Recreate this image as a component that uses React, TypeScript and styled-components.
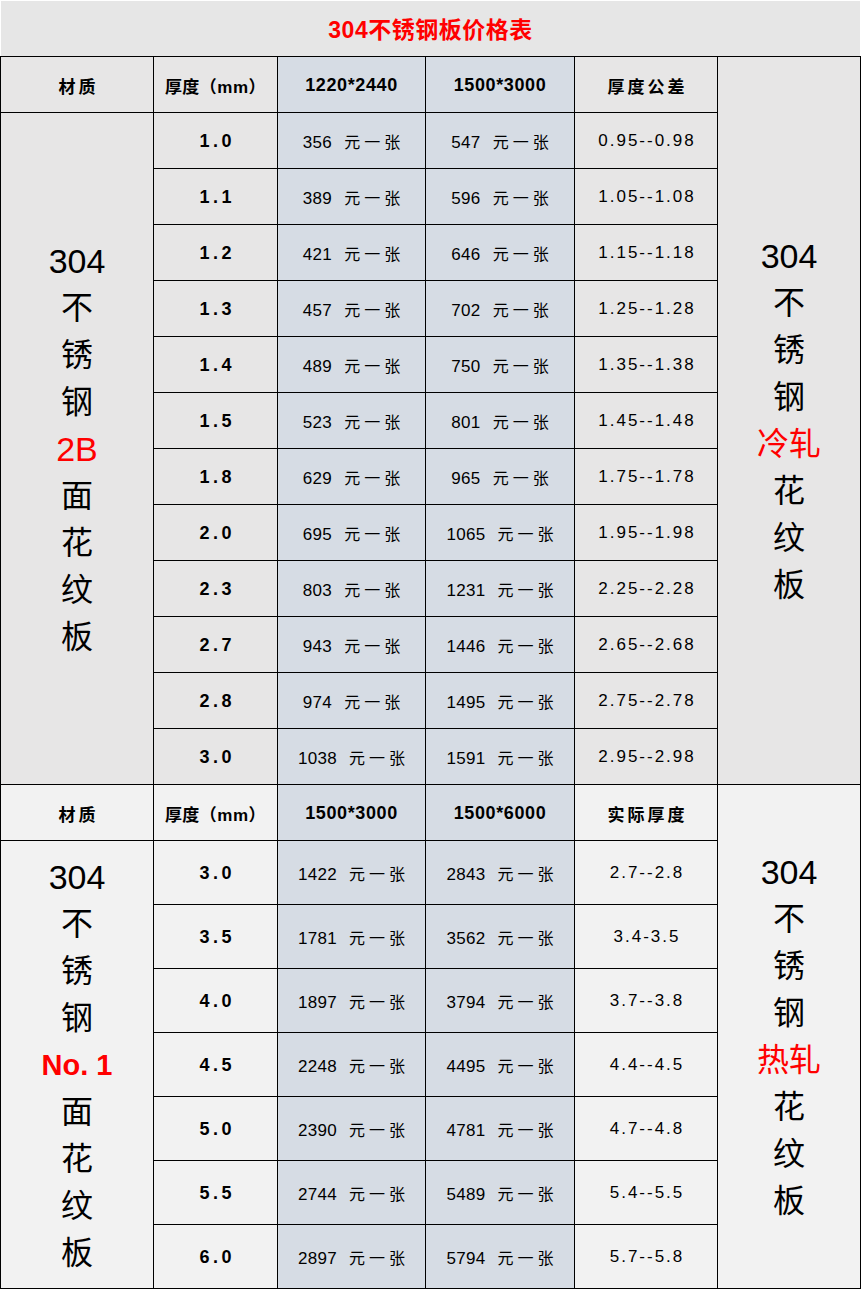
import React from "react";
import styled, { createGlobalStyle } from "styled-components";

const GlobalStyle = createGlobalStyle`
  html, body { margin: 0; padding: 0; background: #ffffff; }
  body { font-family: "Liberation Sans", "Noto Sans CJK SC", sans-serif; color: #000; }
`;

const CJK = `"Liberation Sans", "Noto Sans CJK SC", sans-serif`;

const Page = styled.div`
  width: 861px;
`;

const TitleBar = styled.div`
  height: 56px;
  border: 1px solid #ffffff;
  border-bottom: none;
  background: #e6e6e6;
  display: flex;
  align-items: center;
  justify-content: center;
  padding-bottom: 2px;
  box-sizing: border-box;
  color: #ff0000;
  font-family: ${CJK};
  font-weight: 700;
  font-size: 23px;
  letter-spacing: 0.5px;
`;

const Grid = styled.div`
  display: grid;
  grid-template-columns: 152px 123px 147px 148px 142px 142px;
  grid-template-rows: repeat(14, 55px) repeat(7, 63px);
  gap: 1px;
  padding: 1px;
  background: #000;
`;

type Tone = "a" | "b" | "size";
const toneBg: Record<Tone, string> = { a: "#e7e6e6", b: "#f2f2f2", size: "#d6dce4" };

const Cell = styled.div<{ $tone: Tone; $span?: number }>`
  background: ${(p) => toneBg[p.$tone]};
  display: flex;
  align-items: center;
  justify-content: center;
  padding-top: 1px;
  ${(p) => (p.$span ? `grid-row: span ${p.$span};` : "")}
`;

const HeadText = styled.span<{ $tight?: boolean }>`
  font-family: ${CJK};
  font-weight: 700;
  font-size: 17px;
  letter-spacing: ${(p) => (p.$tight ? "0.5px" : "3px")};
  margin-right: ${(p) => (p.$tight ? "0" : "-3px")};
`;

const SizeHead = styled.span`
  font-family: "Liberation Sans", sans-serif;
  font-weight: 700;
  font-size: 18px;
  letter-spacing: 0.6px;
`;

const Thick = styled.span`
  font-family: "Liberation Sans", sans-serif;
  font-weight: 700;
  font-size: 18px;
  letter-spacing: 3.5px;
  margin-right: -3.5px;
`;

const Price = styled.span`
  display: flex;
  align-items: baseline;
  font-size: 17px;
`;

const Num = styled.span`
  font-family: "Liberation Sans", sans-serif;
  letter-spacing: 0.3px;
`;

const Unit = styled.span`
  font-family: "Noto Sans CJK SC", sans-serif;
  font-size: 16px;
  letter-spacing: 4px;
  margin-left: 12px;
  margin-right: -4px;
`;

const Tol = styled.span`
  font-family: "Liberation Sans", sans-serif;
  font-size: 17px;
  letter-spacing: 2px;
  margin-right: -2px;
`;

const Stack = styled.div`
  display: flex;
  flex-direction: column;
  align-items: center;
`;

const BigLine = styled.span<{ $red?: boolean; $bold?: boolean; $sans?: boolean }>`
  height: 47px;
  line-height: 47px;
  font-family: ${CJK};
  font-size: ${(p) => (p.$sans ? (p.$bold ? "29px" : "34px") : "32px")};
  font-weight: ${(p) => (p.$bold ? 700 : 400)};
  color: ${(p) => (p.$red ? "#ff0000" : "#000")};
  white-space: pre;
`;

type Line = { t: string; red?: boolean; bold?: boolean; sans?: boolean };

const BigLabel = ({ lines }: { lines: Line[] }) => (
  <Stack>
    {lines.map((l, i) => (
      <BigLine key={i} $red={l.red} $bold={l.bold} $sans={l.sans}>
        {l.t}
      </BigLine>
    ))}
  </Stack>
);

const base = (mid: Line): Line[] => [
  { t: "304", sans: true },
  { t: "不" },
  { t: "锈" },
  { t: "钢" },
  mid,
];

const tail = (first: string | null): Line[] =>
  [first ? { t: first } : null, { t: "花" }, { t: "纹" }, { t: "板" }].filter(Boolean) as Line[];

type Row = [string, string, string, string];

const rows1: Row[] = [
  ["1.0", "356", "547", "0.95--0.98"],
  ["1.1", "389", "596", "1.05--1.08"],
  ["1.2", "421", "646", "1.15--1.18"],
  ["1.3", "457", "702", "1.25--1.28"],
  ["1.4", "489", "750", "1.35--1.38"],
  ["1.5", "523", "801", "1.45--1.48"],
  ["1.8", "629", "965", "1.75--1.78"],
  ["2.0", "695", "1065", "1.95--1.98"],
  ["2.3", "803", "1231", "2.25--2.28"],
  ["2.7", "943", "1446", "2.65--2.68"],
  ["2.8", "974", "1495", "2.75--2.78"],
  ["3.0", "1038", "1591", "2.95--2.98"],
];

const rows2: Row[] = [
  ["3.0", "1422", "2843", "2.7--2.8"],
  ["3.5", "1781", "3562", "3.4-3.5"],
  ["4.0", "1897", "3794", "3.7--3.8"],
  ["4.5", "2248", "4495", "4.4--4.5"],
  ["5.0", "2390", "4781", "4.7--4.8"],
  ["5.5", "2744", "5489", "5.4--5.5"],
  ["6.0", "2897", "5794", "5.7--5.8"],
];

const PriceText = ({ v }: { v: string }) => (
  <Price>
    <Num>{v}</Num>
    <Unit>元一张</Unit>
  </Price>
);

const Section = ({
  tone,
  sizes,
  tolHead,
  rows,
  left,
  right,
}: {
  tone: Tone;
  sizes: [string, string];
  tolHead: string;
  rows: Row[];
  left: Line[];
  right: Line[];
}) => (
  <>
    <Cell $tone={tone}><HeadText>材质</HeadText></Cell>
    <Cell $tone={tone}><HeadText $tight>厚度（mm）</HeadText></Cell>
    <Cell $tone="size"><SizeHead>{sizes[0]}</SizeHead></Cell>
    <Cell $tone="size"><SizeHead>{sizes[1]}</SizeHead></Cell>
    <Cell $tone={tone}><HeadText>{tolHead}</HeadText></Cell>
    <Cell $tone={tone} $span={rows.length + 1}><BigLabel lines={right} /></Cell>
    <Cell $tone={tone} $span={rows.length}><BigLabel lines={left} /></Cell>
    {rows.map((r) => (
      <React.Fragment key={r[0] + r[1]}>
        <Cell $tone={tone}><Thick>{r[0]}</Thick></Cell>
        <Cell $tone="size"><PriceText v={r[1]} /></Cell>
        <Cell $tone="size"><PriceText v={r[2]} /></Cell>
        <Cell $tone={tone}><Tol>{r[3]}</Tol></Cell>
      </React.Fragment>
    ))}
  </>
);

export default function App() {
  return (
    <Page>
      <GlobalStyle />
      <TitleBar>304不锈钢板价格表</TitleBar>
      <Grid>
        <Section
          tone="a"
          sizes={["1220*2440", "1500*3000"]}
          tolHead="厚度公差"
          rows={rows1}
          left={[...base({ t: "2B", red: true, sans: true }), ...tail("面")]}
          right={[...base({ t: "冷轧", red: true }), ...tail(null)]}
        />
        <Section
          tone="b"
          sizes={["1500*3000", "1500*6000"]}
          tolHead="实际厚度"
          rows={rows2}
          left={[...base({ t: "No. 1", red: true, bold: true, sans: true }), ...tail("面")]}
          right={[...base({ t: "热轧", red: true }), ...tail(null)]}
        />
      </Grid>
    </Page>
  );
}
